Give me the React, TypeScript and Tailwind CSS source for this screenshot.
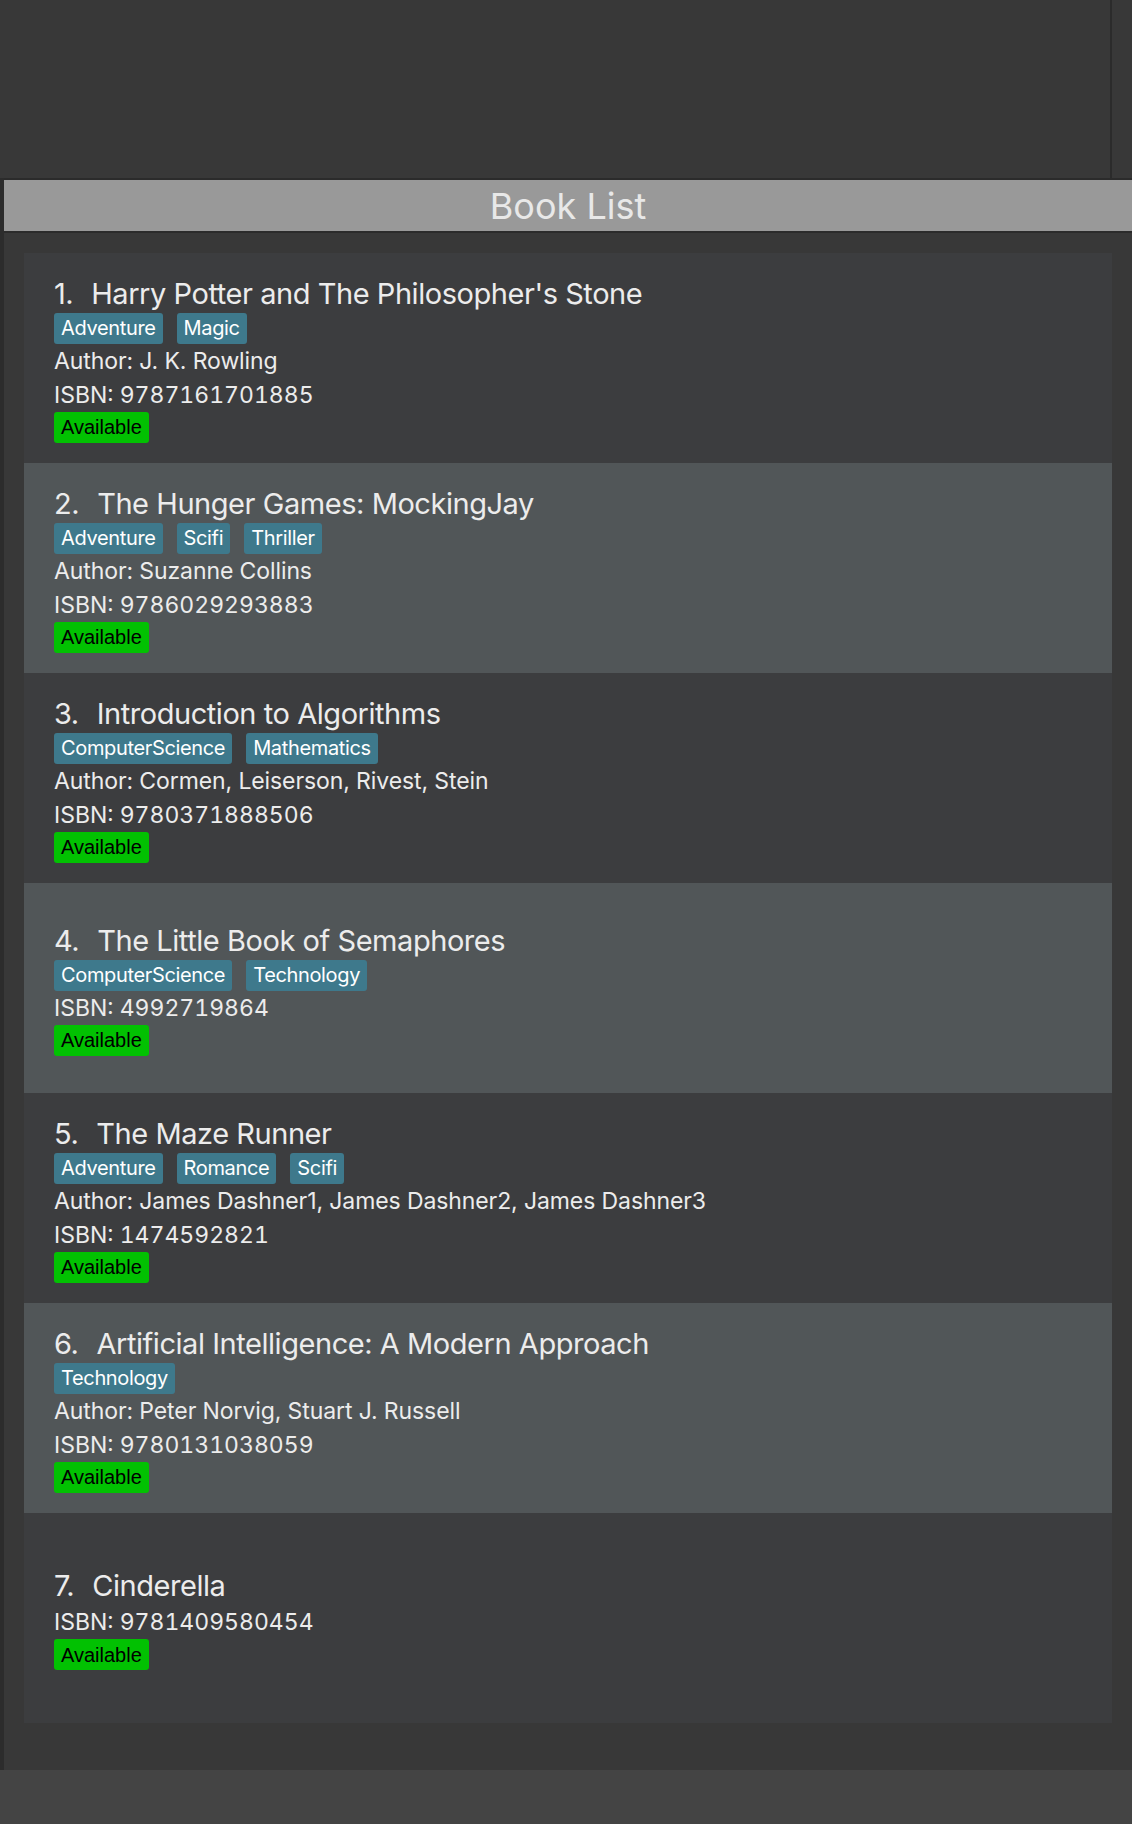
type Book = {
  title: string;
  tags: string[];
  author?: string;
  isbn: string;
};

const books: Book[] = [
  { title: "Harry Potter and The Philosopher's Stone", tags: ['Adventure', 'Magic'], author: 'J. K. Rowling', isbn: '9787161701885' },
  { title: 'The Hunger Games: MockingJay', tags: ['Adventure', 'Scifi', 'Thriller'], author: 'Suzanne Collins', isbn: '9786029293883' },
  { title: 'Introduction to Algorithms', tags: ['ComputerScience', 'Mathematics'], author: 'Cormen, Leiserson, Rivest, Stein', isbn: '9780371888506' },
  { title: 'The Little Book of Semaphores', tags: ['ComputerScience', 'Technology'], isbn: '4992719864' },
  { title: 'The Maze Runner', tags: ['Adventure', 'Romance', 'Scifi'], author: 'James Dashner1, James Dashner2, James Dashner3', isbn: '1474592821' },
  { title: 'Artificial Intelligence: A Modern Approach', tags: ['Technology'], author: 'Peter Norvig, Stuart J. Russell', isbn: '9780131038059' },
  { title: 'Cinderella', tags: [], isbn: '9781409580454' },
];

const BookCard = ({ book, index }: { book: Book; index: number }) => {
  const even = index % 2 === 1;
  return (
    <div className={`h-[210px] pl-[30px] pt-1 flex flex-col justify-center ${even ? 'bg-[#515658]' : 'bg-[#3c3d3f]'}`}>
      {/* Title row */}
      <div className="flex items-baseline gap-[18px] text-[29px] leading-[31px] mb-[4px] tracking-[-0.45px] text-[#ececec]">
        <span>{index + 1}.</span>
        <span>{book.title}</span>
      </div>

      {book.tags.length > 0 && (
        <div className="flex gap-[14px] h-[31px]">
          {book.tags.map((tag) => (
            <span key={tag} className="px-[7px] h-[31px] flex items-center rounded-[3px] bg-[#3e798c] text-white text-[20px] tracking-[-0.35px]">
              {tag}
            </span>
          ))}
        </div>
      )}

      {book.author && (
        <div className="text-[23px] leading-[34px] tracking-[-0.1px] text-[#ececec]">Author: {book.author}</div>
      )}
      <div className="text-[23px] leading-[34px] tabular-nums text-[#ececec]">ISBN: {book.isbn}</div>

      <div className="flex">
        <span className="h-[31px] px-[7px] flex items-center rounded-[3px] bg-[#02c102] text-black text-[20px] font-['Liberation_Sans',Arial,sans-serif]">
          Available
        </span>
      </div>
    </div>
  );
};

export default function App() {
  return (
    <div className="w-[1132px] h-[1824px] flex flex-col bg-[#383838] font-['Inter','Noto_Sans',sans-serif]">
      {/* top empty area with divider */}
      <div className="h-[178px] flex justify-end pr-[20px]">
        <div className="w-[2px] bg-[#2b2b2b]" />
      </div>

      <div className="flex flex-1 min-h-0">
        <div className="w-[4px] bg-[#2c2c2c]" />
        <div className="flex-1 flex flex-col">
          <div className="h-[55px] border-y-2 border-[#2b2b2b] bg-[#999999] flex items-center justify-center text-[36px] text-[#e8e8e8]">
            Book List
          </div>
          <div className="pt-[20px] pl-[20px] pr-[20px]">
            {books.map((book, i) => (
              <BookCard key={book.isbn} book={book} index={i} />
            ))}
          </div>
        </div>
      </div>

      <div className="h-[54px] bg-[#444444]" />
    </div>
  );
}
